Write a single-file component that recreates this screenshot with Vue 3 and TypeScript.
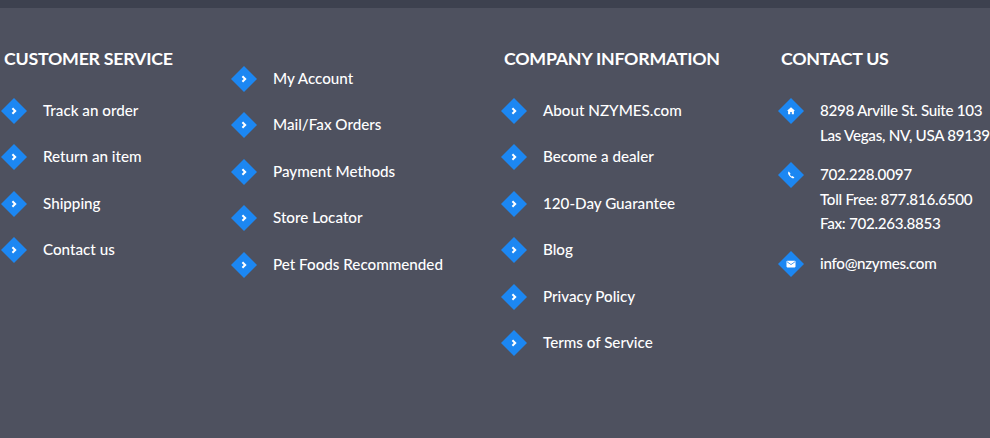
<script setup lang="ts">
const col1 = ['Track an order', 'Return an item', 'Shipping', 'Contact us']
const col2 = ['My Account', 'Mail/Fax Orders', 'Payment Methods', 'Store Locator', 'Pet Foods Recommended']
const col3 = ['About NZYMES.com', 'Become a dealer', '120-Day Guarantee', 'Blog', 'Privacy Policy', 'Terms of Service']
</script>

<template>
  <footer class="footer">
    <div class="topbar"></div>
    <div class="cols">
      <section class="col c1">
        <h3>CUSTOMER SERVICE</h3>
        <ul>
          <li v-for="t in col1" :key="t">
            <svg class="dia" viewBox="0 0 26 26"><polygon points="13,0 26,13 13,26 0,13" fill="#1c87f2" /><path d="M11.4 10.2 14.2 13 11.4 15.8" fill="none" stroke="#fff" stroke-width="2" /></svg>
            <span>{{ t }}</span>
          </li>
        </ul>
      </section>
      <section class="col c2">
        <ul>
          <li v-for="t in col2" :key="t">
            <svg class="dia" viewBox="0 0 26 26"><polygon points="13,0 26,13 13,26 0,13" fill="#1c87f2" /><path d="M11.4 10.2 14.2 13 11.4 15.8" fill="none" stroke="#fff" stroke-width="2" /></svg>
            <span>{{ t }}</span>
          </li>
        </ul>
      </section>
      <section class="col c3">
        <h3>COMPANY INFORMATION</h3>
        <ul>
          <li v-for="t in col3" :key="t">
            <svg class="dia" viewBox="0 0 26 26"><polygon points="13,0 26,13 13,26 0,13" fill="#1c87f2" /><path d="M11.4 10.2 14.2 13 11.4 15.8" fill="none" stroke="#fff" stroke-width="2" /></svg>
            <span>{{ t }}</span>
          </li>
        </ul>
      </section>
      <section class="col c4">
        <h3>CONTACT US</h3>
        <ul>
          <li>
            <svg class="dia" viewBox="0 0 26 26"><polygon points="13,0 26,13 13,26 0,13" fill="#1c87f2" /><path d="M13 9.2 9 12.8h1.1v3.4h2.1v-2.2h1.6v2.2h2.1v-3.4H17z" fill="#fff" /></svg>
            <span>8298 Arville St. Suite 103<br />Las Vegas, NV, USA 89139</span>
          </li>
          <li>
            <svg class="dia" viewBox="0 0 26 26"><polygon points="13,0 26,13 13,26 0,13" fill="#1c87f2" /><path d="M10.8 9.6c-.9.7-.9 1.9-.2 3.2.8 1.5 2.2 2.9 3.7 3.4.9.2 1.7 0 2.1-.8l-1.8-1.4-.9.6c-.8-.5-1.3-1.1-1.8-1.9l.7-.9z" fill="#fff" /></svg>
            <span>702.228.0097<br />Toll Free: 877.816.6500<br />Fax: 702.263.8853</span>
          </li>
          <li>
            <svg class="dia" viewBox="0 0 26 26"><polygon points="13,0 26,13 13,26 0,13" fill="#1c87f2" /><rect x="8.5" y="9.8" width="9" height="6.6" rx=".8" fill="#fff" /><path d="M8.8 10.6 13 13.6l4.2-3" fill="none" stroke="#1c87f2" stroke-width=".8" /></svg>
            <span>info@nzymes.com</span>
          </li>
        </ul>
      </section>
    </div>
  </footer>
</template>

<style>
html, body { margin: 0; background: #4e515f; }
</style>

<style scoped>
.footer {
  height: 438px;
  overflow: hidden;
  background: #4e515f;
  color: #fff;
  font-family: Lato, "Open Sans", sans-serif;
}
.topbar { height: 8px; background: #3d414f; }
.cols {
  display: grid;
  grid-template-columns: 230px 270px 277px 1fr;
  padding: 0 0 0 1px;
}
.col { min-width: 0; }
h3 {
  margin: 38px 0 28px 3px;
  font-size: 17.8px;
  line-height: 24px;
  font-weight: 700;
  letter-spacing: -0.25px;
  white-space: nowrap;
}
ul { list-style: none; margin: 0; padding: 0; display: flex; flex-direction: column; }
.c2 ul { padding-top: 58px; gap: 20.4px; }
.c1 ul, .c3 ul { gap: 20.4px; }
.c4 ul { gap: 15px; letter-spacing: -0.3px; }
li {
  display: flex;
  gap: 16px;
  font-size: 15.2px;
  line-height: 24.5px;
  white-space: nowrap;
  font-weight: 500;
}
.dia { width: 26px; height: 26px; flex: none; }
</style>
